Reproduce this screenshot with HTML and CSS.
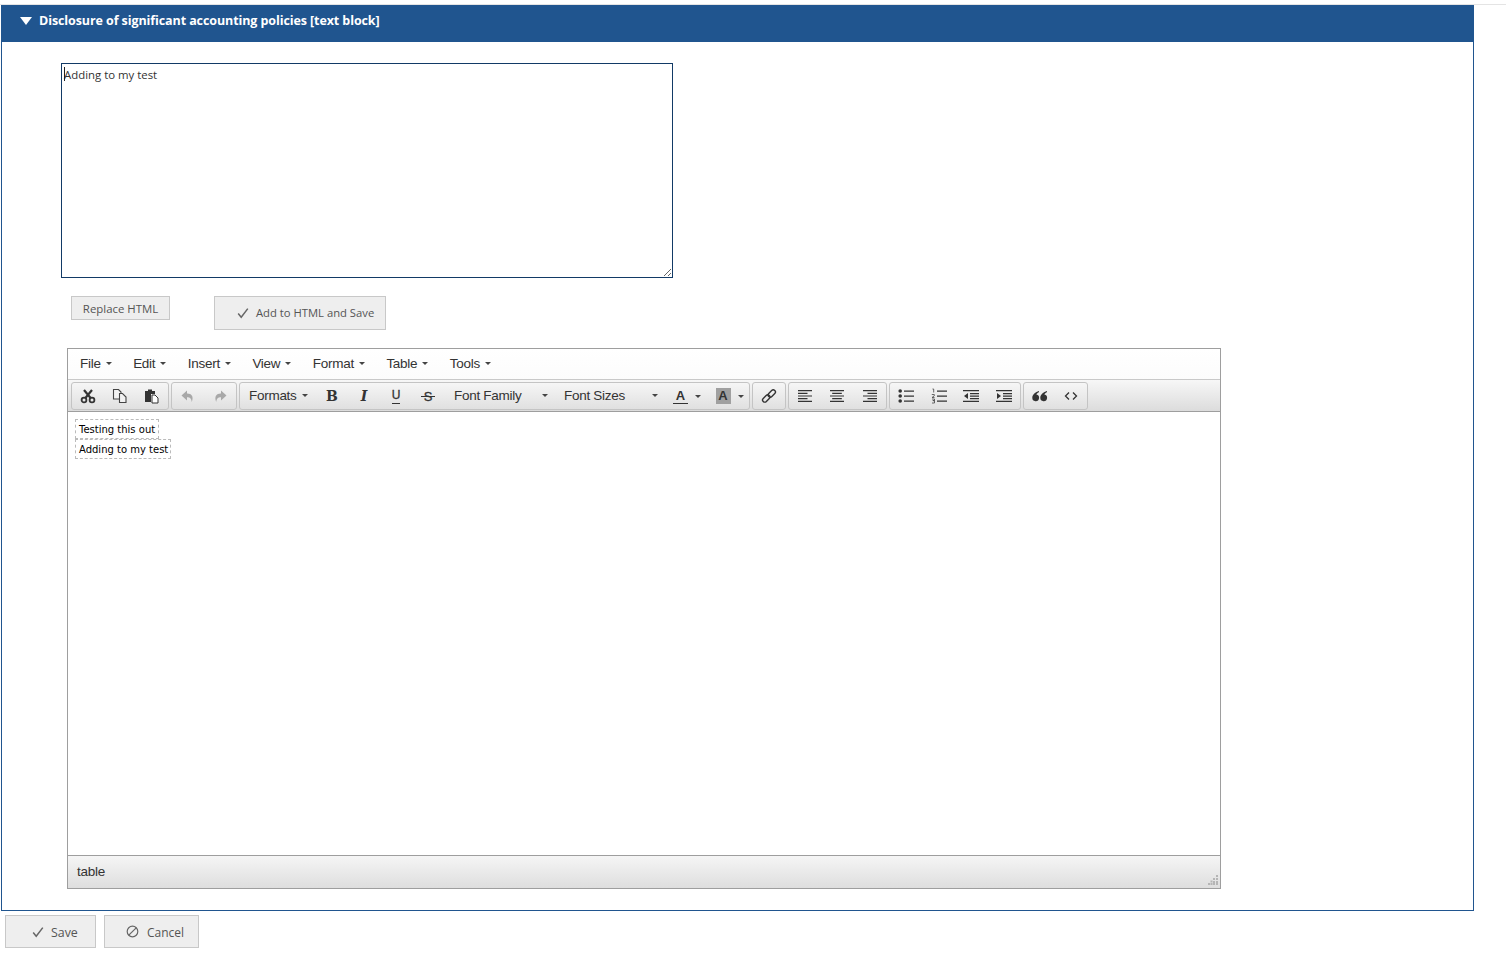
FILE: index.html
```html
<!DOCTYPE html>
<html lang="en">
<head>
<meta charset="utf-8">
<title>Disclosure of significant accounting policies</title>
<link rel="stylesheet" href="styles.css">
</head>
<body>
<div class="topline"></div>
<section class="panel">
  <header class="panel-head">
    <svg class="tri" width="12" height="8" viewBox="0 0 12 8"><path d="M0 0h12L6 8z" fill="#fff"/></svg>
    <h1>Disclosure of significant accounting policies [text block]</h1>
  </header>
  <div class="panel-body">
    <div class="ta-wrap">
      <textarea class="source" spellcheck="false">Adding to my test</textarea>
      <span class="caret-line"></span>
    </div>
    <div class="actions">
      <button class="btn btn-replace">Replace HTML</button>
      <button class="btn btn-add"><svg class="ico" width="12" height="12" viewBox="0 0 12 12"><path d="M1.200 6.600 4.200 10.200 10.800 1.600" fill="none" stroke="#666" stroke-width="1.500"/></svg>Add to HTML and Save</button>
    </div>
    <div class="editor">
      <nav class="menubar">
        <span class="mi">File<i class="car"></i></span>
        <span class="mi">Edit<i class="car"></i></span>
        <span class="mi">Insert<i class="car"></i></span>
        <span class="mi">View<i class="car"></i></span>
        <span class="mi">Format<i class="car"></i></span>
        <span class="mi">Table<i class="car"></i></span>
        <span class="mi">Tools<i class="car"></i></span>
      </nav>
      <div class="toolbar">
        <div class="grp">
          <span class="tb"><svg width="16" height="16" viewBox="0 0 16 16"><circle cx="4" cy="12" r="2.400" fill="none" stroke="#333" stroke-width="1.800"/><circle cx="12" cy="12" r="2.400" fill="none" stroke="#333" stroke-width="1.800"/><path d="M5.400 10 12 2M10.600 10 4 2" stroke="#333" stroke-width="2.200" fill="none"/></svg></span>
          <span class="tb"><svg width="16" height="16" viewBox="0 0 16 16"><path d="M1.500 1.500h5l2.500 2.500v7h-7.500z" fill="#f2f2f2" stroke="#444" stroke-width="1.100"/><path d="M7.500 5.500h3l3.500 3.500v5.500H7.500z" fill="#f2f2f2" stroke="#444" stroke-width="1.100"/></svg></span>
          <span class="tb"><svg width="16" height="16" viewBox="0 0 16 16"><path d="M1 3h3V1.500h4V3h3v3H7v8H1z" fill="#333"/><path d="M8 7h3l3 3v5H8z" fill="#fff" stroke="#333"/></svg></span>
        </div>
        <div class="grp">
          <span class="tb"><svg width="16" height="16" viewBox="0 0 16 16"><path d="M7 2.500 1.500 7.500 7 12.500V9.300c3 0 4.300 1.200 4.800 4.700C14 8.500 11.500 5.500 7 5.600z" fill="#a8a8a8"/></svg></span>
          <span class="tb"><svg width="16" height="16" viewBox="0 0 16 16"><path d="M9 2.500l5.500 5-5.500 5V9.300c-3 0-4.300 1.200-4.800 4.700C2 8.500 4.500 5.500 9 5.600z" fill="#a8a8a8"/></svg></span>
        </div>
        <div class="grp">
          <span class="tb tb-formats">Formats<i class="car"></i></span>
          <span class="tb g g-b">B</span>
          <span class="tb g g-i">I</span>
          <span class="tb g"><span class="g-u">U</span></span>
          <span class="tb g"><span class="g-s">S</span></span>
          <span class="tb tb-list">Font Family<i class="car"></i></span>
          <span class="tb tb-list">Font Sizes<i class="car"></i></span>
          <span class="tb tb-color"><b class="a a-fore">A</b><i class="car"></i></span>
          <span class="tb tb-color"><b class="a a-back">A</b><i class="car"></i></span>
        </div>
        <div class="grp">
          <span class="tb"><svg width="16" height="16" viewBox="0 0 16 16" fill="none" stroke="#333" stroke-width="1.400"><rect x="1" y="8.300" width="8.500" height="4.400" rx="2.200" transform="rotate(-45 5.250 10.500)"/><rect x="6.500" y="3.300" width="8.500" height="4.400" rx="2.200" transform="rotate(-45 10.750 5.500)"/></svg></span>
        </div>
        <div class="grp grp-align">
          <span class="tb"><svg width="16" height="16" viewBox="0 0 16 16"><path d="M1 2h14v1.200H1zM1 4.700h9.500v1.200H1zM1 7.400h14v1.200H1zM1 10.100h9.500v1.200H1zM1 12.800h14V14H1z" fill="#333"/></svg></span>
          <span class="tb"><svg width="16" height="16" viewBox="0 0 16 16"><path d="M1 2h14v1.200H1zM3.200 4.700h9.600v1.200H3.200zM1 7.400h14v1.200H1zM3.200 10.100h9.600v1.200H3.200zM1 12.800h14V14H1z" fill="#333"/></svg></span>
          <span class="tb"><svg width="16" height="16" viewBox="0 0 16 16"><path d="M1 2h14v1.200H1zM5.500 4.700H15v1.200H5.500zM1 7.400h14v1.200H1zM5.500 10.100H15v1.200H5.500zM1 12.800h14V14H1z" fill="#333"/></svg></span>
        </div>
        <div class="grp grp-lists">
          <span class="tb"><svg width="16" height="16" viewBox="0 0 16 16"><circle cx="2.200" cy="3" r="1.800" fill="#333"/><circle cx="2.200" cy="8" r="1.800" fill="#333"/><circle cx="2.200" cy="13" r="1.800" fill="#333"/><path d="M6 2.500h10v1.200H6zM6 7.500h10v1.200H6zM6 12.500h10v1.200H6z" fill="#333"/></svg></span>
          <span class="tb"><svg width="16" height="16" viewBox="0 0 16 16"><path d="M6 2.500h10v1.200H6zM6 7.500h10v1.200H6zM6 12.500h10v1.200H6z" fill="#333"/><path d="M1.500 1h1.200v3.500M.8 6.500h2.500v1.300L1 9.500h2.500M1 11h2.500v1.600H1.800h1.700V15H1" fill="none" stroke="#444" stroke-width=".8"/></svg></span>
          <span class="tb"><svg width="16" height="16" viewBox="0 0 16 16"><path d="M0 2h16v1.200H0zM7 5h9v1.200H7zM7 7.500h9v1.200H7zM7 10h9v1.200H7zM0 12.800h16V14H0zM5 5v6L1 8z" fill="#333"/></svg></span>
          <span class="tb"><svg width="16" height="16" viewBox="0 0 16 16"><path d="M0 2h16v1.200H0zM7 5h9v1.200H7zM7 7.500h9v1.200H7zM7 10h9v1.200H7zM0 12.800h16V14H0zM1 5v6l4-3z" fill="#333"/></svg></span>
        </div>
        <div class="grp grp-misc">
          <span class="tb"><svg width="16" height="16" viewBox="0 0 16 16"><path d="M7 3C3.500 4 .3 6.500.3 9.800a3.400 3.400 0 1 0 4.100-3.300C4.700 5.500 5.800 4.700 7 4.300zM15 3c-3.500 1-6.700 3.500-6.700 6.800a3.400 3.400 0 1 0 4.100-3.300c.3-1 1.400-1.800 2.600-2.200z" fill="#333"/></svg></span>
          <span class="tb"><svg width="16" height="16" viewBox="0 0 16 16" fill="none" stroke="#333" stroke-width="1.300"><path d="M6 4.500 2.500 8 6 11.500M10 4.500 13.500 8 10 11.500"/></svg></span>
        </div>
      </div>
      <div class="edit-area">
        <div class="tag">Testing this out</div>
        <div class="tag">Adding to my test</div>
      </div>
      <footer class="status">
        <span>table</span>
        <svg class="grip" width="10" height="10" viewBox="0 0 10 10"><path d="M8 0h2v2H8zM5 3h2v2H5zM8 3h2v2H8zM2.500 5.500h2v2h-2zM5 6h2v2H5zM8 6h2v2H8zM0 8h2v2H0zM2.500 8h2v2h-2zM5 8h2v2H5zM8 8h2v2H8z" fill="#b5b5b5"/></svg>
      </footer>
    </div>
  </div>
</section>
<div class="footer-actions">
  <button class="btn btn-save"><svg class="ico" width="12" height="12" viewBox="0 0 12 12"><path d="M1.200 6.600 4.200 10.200 10.800 1.600" fill="none" stroke="#666" stroke-width="1.500"/></svg>Save</button>
  <button class="btn btn-cancel"><svg class="ico" width="13" height="13" viewBox="0 0 13 13" fill="none" stroke="#666" stroke-width="1.200"><circle cx="6.500" cy="6.500" r="5.300"/><path d="M2.800 10.200 10.200 2.800"/></svg>Cancel</button>
</div>
</body>
</html>
```
FILE: styles.css
```css
* { box-sizing: border-box; }
html, body { margin: 0; padding: 0; background: #fff; overflow: hidden; }
body { font-family: "Open Sans", "Liberation Sans", sans-serif; color: #333; height: 956px; padding-top: 4px; }

.topline { height: 1px; background: #e4e4e4; }

.panel { width: 1473px; height: 906px; margin-left: 1px; border: 1px solid #20558f; border-top: 0; }
.panel-head { height: 37px; margin: 0 -1px; background: #20558f; display: flex; align-items: flex-start; padding: 0 0 0 19px; color: #fff; }
.tri { margin-top: 12px; flex: none; }
.panel-head h1 { margin: 7px 0 0 7px; font-size: 12.5px; line-height: 17px; font-weight: 700; letter-spacing: -.09px; }

.panel-body { padding: 21px 0 0 59px; }

.ta-wrap { position: relative; width: 612px; height: 215px; }
.source { display: block; width: 612px; height: 215px; margin: 0; padding: 3px 2px; border: 1px solid #123a66; background: #fff; color: #333; font: 11.400px/16px "Open Sans", sans-serif; outline: 0; }
.caret-line { position: absolute; left: 3px; top: 4px; width: 1px; height: 14px; background: #222; }

.btn { display: block; margin: 0; font: 11.400px/16px "Open Sans", sans-serif; color: #555; background: #eee; border: 1px solid #c8c8c8; padding: 0; cursor: pointer; }
.actions { display: flex; align-items: flex-start; padding: 18px 0 0 10px; }
.btn-replace { width: 99px; height: 24px; padding-top: 1px; }
.btn-add { width: 172px; height: 34px; margin-left: 44px; display: flex; align-items: center; padding: 0 0 0 22px; font-size: 11.250px; }
.ico { margin-right: 7px; flex: none; }

.editor { width: 1154px; height: 541px; margin: 18px 0 0 6px; border: 1px solid #9e9e9e; display: flex; flex-direction: column; font-family: "Liberation Sans", Arial, sans-serif; font-size: 13.500px; letter-spacing: -.28px; color: #333; }
.menubar { height: 31px; flex: none; display: flex; align-items: center; gap: 21.500px; padding: 0 0 2px 12px; background: linear-gradient(#fff, #fcfcfc); border-bottom: 1px solid #c9c9c9; }
.mi { display: flex; align-items: center; }
.car { display: block; width: 0; height: 0; margin-left: 5px; border: 3px solid transparent; border-top-color: #444; border-bottom: 0; flex: none; }

.toolbar { height: 32px; flex: none; display: flex; gap: 2px; padding: 2px 0 1px 3px; background: linear-gradient(#f7f7f7, #dcdcdc); border-bottom: 1px solid #9e9e9e; }
.grp { display: flex; height: 28px; border: 1px solid #c4c4c4; border-radius: 3px; background: linear-gradient(#f6f6f6, #e0e0e0); }
.tb { display: flex; align-items: center; justify-content: center; width: 32px; flex: none; }
.grp-align .tb { width: 32.330px; }
.grp-lists .tb { width: 32.500px; }
.grp-misc .tb { width: 31.500px; }
.tb-formats { width: 76px; justify-content: flex-start; padding: 0 0 1px 9px; }
.tb-list { width: 110px; justify-content: space-between; padding: 0 6px 1px 10px; }
.tb-color { width: 42.500px; justify-content: flex-start; padding-left: 9px; }
.tb-color .car { margin-left: 7px; }
.g { font-weight: 700; letter-spacing: 0; }
.g-b { font-family: "DejaVu Serif", serif; font-size: 14px; }
.g-i { font-family: "DejaVu Serif", serif; font-style: italic; font-size: 14px; }
.g-u { display: block; height: 15px; line-height: 12px; border-bottom: 1px solid #333; font-size: 12px; font-weight: 400; -webkit-text-stroke: .3px #333; }
.g-s { position: relative; display: block; font-size: 13px; line-height: 15px; font-weight: 400; -webkit-text-stroke: .3px #333; }
.g-s::after { content: ""; position: absolute; left: -3px; right: -3px; top: 7px; height: 1px; background: #333; }
.a { display: block; width: 15px; text-align: center; font-size: 13px; line-height: 15px; letter-spacing: 0; }
.a-fore { border-bottom: 1px solid #333; height: 16px; }
.a-back { background: #a0a0a0; height: 16px; }

.edit-area { flex: 1; padding: 7px 0 0 7px; background: #fff; font-family: "DejaVu Sans", Verdana, sans-serif; font-size: 10px; letter-spacing: 0; color: #000; }
.tag { width: fit-content; height: 20px; line-height: 18px; padding: 1px 2px 0 3px; border: 1px dashed #bbb; }
.tag:first-child { padding-right: 3px; }

.status { height: 33px; flex: none; display: flex; align-items: center; justify-content: space-between; padding: 0 2px 2px 9px; background: linear-gradient(#f5f5f5, #dedede); border-top: 1px solid #9e9e9e; }
.grip { align-self: flex-end; margin-bottom: 1px; }

.footer-actions { display: flex; gap: 8px; padding: 4px 0 0 5px; }
.btn-save { width: 91px; height: 33px; display: flex; align-items: center; padding: 2px 0 0 26px; font-size: 12.400px; }
.btn-cancel { width: 95px; height: 33px; display: flex; align-items: center; padding: 2px 0 0 21px; font-size: 12px; }
.btn-cancel .ico { margin-right: 8px; }
.footer-actions .ico { margin-top: -2px; }
```
